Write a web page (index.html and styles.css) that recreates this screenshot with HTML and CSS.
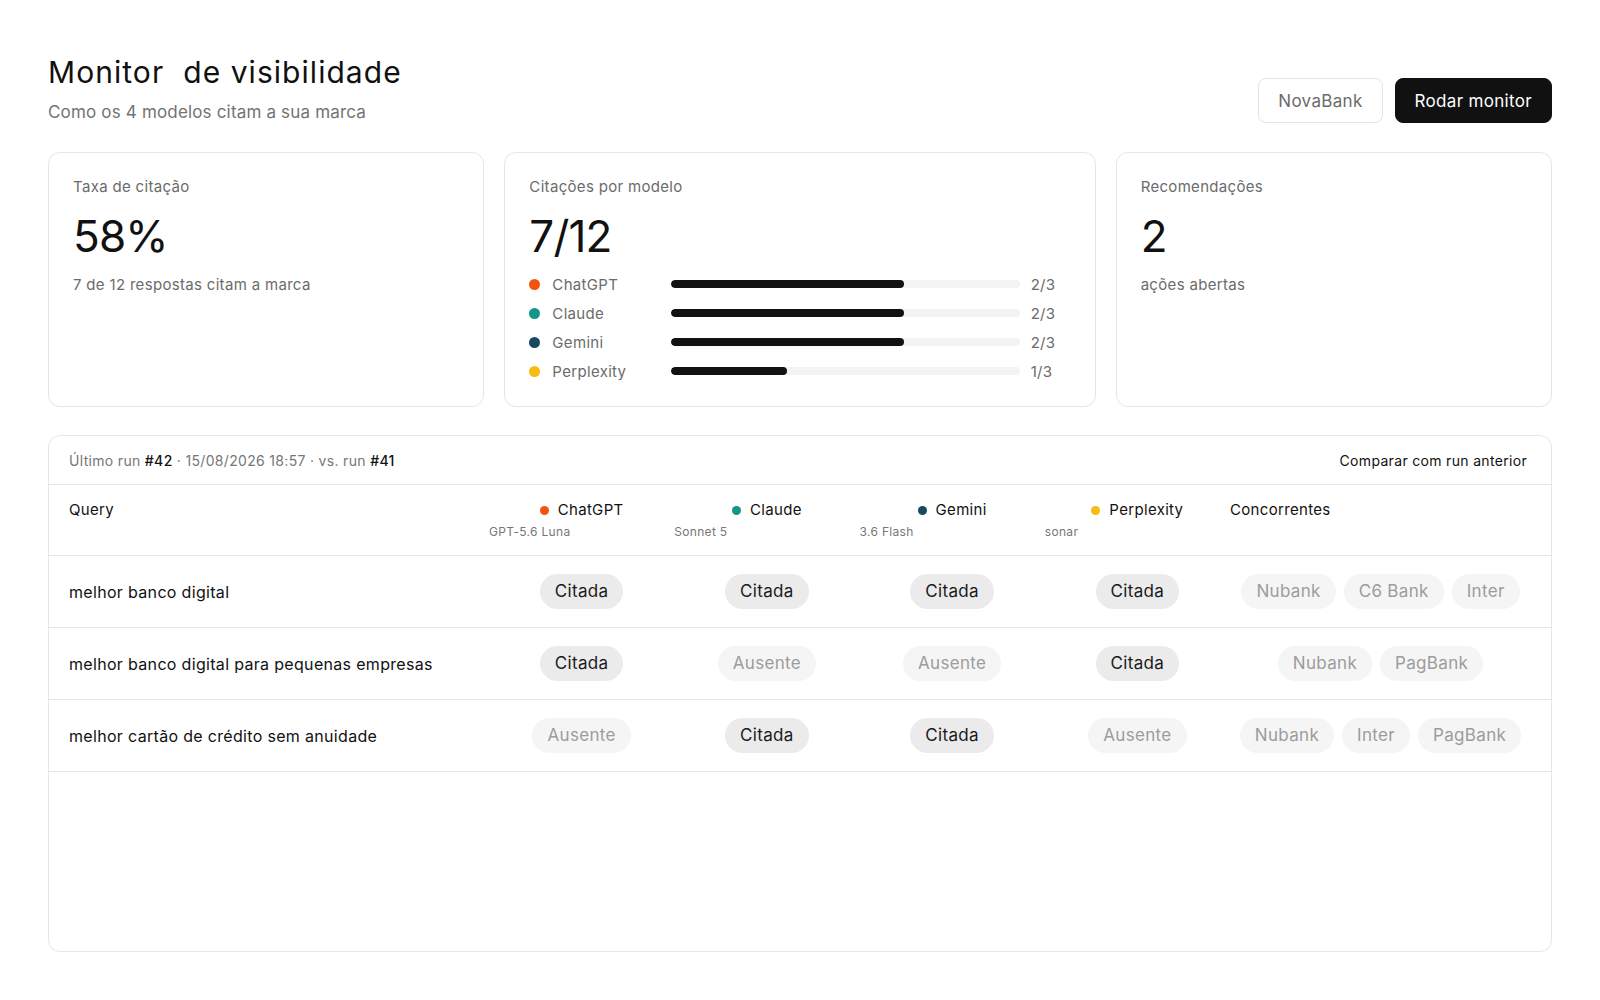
FILE: index.html
```html
<!DOCTYPE html>
<html lang="pt-BR">

<head>
    <meta charset="utf-8" />
    <title>Monitor de visibilidade</title>
    <link rel="stylesheet" href="styles.css">
</head>

<body>

<div class="page">
    <div class="top">
        <div class="heading">
            <h1>Monitor&nbsp; de visibilidade</h1>
            <p class="sub">Como os 4 modelos citam a sua marca</p>
        </div>
        <div class="actions">
            <button class="btn">NovaBank</button>
            <button class="btn btn-dark">Rodar monitor</button>
        </div>
    </div>

    <div class="cards">
        <div class="card">
            <div class="card-label">Taxa de citação</div>
            <div class="card-value">58%</div>
            <div class="card-note">7 de 12 respostas citam a marca</div>
        </div>
        <div class="card">
            <div class="card-label">Citações por modelo</div>
            <div class="card-value">7/12</div>
            <ul class="bars">
                <li><span class="dot gpt"></span><span class="bar-name">ChatGPT</span><span class="track"><span class="fill" style="width: 66.67%"></span></span><span class="bar-num">2/3</span></li>
                <li><span class="dot claude"></span><span class="bar-name">Claude</span><span class="track"><span class="fill" style="width: 66.67%"></span></span><span class="bar-num">2/3</span></li>
                <li><span class="dot gemini"></span><span class="bar-name">Gemini</span><span class="track"><span class="fill" style="width: 66.67%"></span></span><span class="bar-num">2/3</span></li>
                <li><span class="dot pplx"></span><span class="bar-name">Perplexity</span><span class="track"><span class="fill" style="width: 33.33%"></span></span><span class="bar-num">1/3</span></li>
            </ul>
        </div>
        <div class="card">
            <div class="card-label">Recomendações</div>
            <div class="card-value">2</div>
            <div class="card-note">ações abertas</div>
        </div>
    </div>

    <div class="runs">
        <div class="runs-meta">
            <span>Último run <b>#42</b> · 15/08/2026 18:57 · vs. run <b>#41</b></span>
            <button class="link">Comparar com run anterior</button>
        </div>

        <div class="row head">
            <div class="cell-query">Query</div>
            <div class="model">
                <div class="model-name"><span class="dot gpt"></span>ChatGPT</div>
                <div class="model-ver">GPT-5.6 Luna</div>
            </div>
            <div class="model">
                <div class="model-name"><span class="dot claude"></span>Claude</div>
                <div class="model-ver">Sonnet 5</div>
            </div>
            <div class="model">
                <div class="model-name"><span class="dot gemini"></span>Gemini</div>
                <div class="model-ver">3.6 Flash</div>
            </div>
            <div class="model">
                <div class="model-name"><span class="dot pplx"></span>Perplexity</div>
                <div class="model-ver">sonar</div>
            </div>
            <div class="rivals-head">Concorrentes</div>
        </div>

        <div class="row">
            <div class="cell-query">melhor banco digital</div>
            <div class="cell"><span class="pill on">Citada</span></div>
            <div class="cell"><span class="pill on">Citada</span></div>
            <div class="cell"><span class="pill on">Citada</span></div>
            <div class="cell"><span class="pill on">Citada</span></div>
            <div class="cell rivals"><span class="pill">Nubank</span><span class="pill">C6 Bank</span><span class="pill">Inter</span></div>
        </div>

        <div class="row">
            <div class="cell-query">melhor banco digital para pequenas empresas</div>
            <div class="cell"><span class="pill on">Citada</span></div>
            <div class="cell"><span class="pill">Ausente</span></div>
            <div class="cell"><span class="pill">Ausente</span></div>
            <div class="cell"><span class="pill on">Citada</span></div>
            <div class="cell rivals"><span class="pill">Nubank</span><span class="pill">PagBank</span></div>
        </div>

        <div class="row">
            <div class="cell-query">melhor cartão de crédito sem anuidade</div>
            <div class="cell"><span class="pill">Ausente</span></div>
            <div class="cell"><span class="pill on">Citada</span></div>
            <div class="cell"><span class="pill on">Citada</span></div>
            <div class="cell"><span class="pill">Ausente</span></div>
            <div class="cell rivals"><span class="pill">Nubank</span><span class="pill">Inter</span><span class="pill">PagBank</span></div>
        </div>
    </div>
</div>

</body>

</html>
```

FILE: styles.css
```css
* {
    padding: 0;
    margin: 0;
    list-style: none;
    box-sizing: border-box;
}

body {
    font-family: "Inter", "Noto Sans", sans-serif;
    letter-spacing: 0.02em;
    color: #111;
    background: #fff;
}

button {
    font-family: inherit;
    letter-spacing: inherit;
    cursor: pointer;
}

.page {
    height: 100vh;
    padding: 54px 48px 48px;
    display: flex;
    flex-direction: column;
    gap: 28px;
}

/* cabeçalho */
.top {
    display: flex;
    justify-content: space-between;
    align-items: flex-end;
}

.heading {
    padding-bottom: 2px;
}

.heading h1 {
    font-size: 30px;
    line-height: 36px;
    font-weight: 400;
    letter-spacing: 0.035em;
}

.heading .sub {
    margin-top: 12px;
    font-size: 17px;
    line-height: 20px;
    letter-spacing: 0.01em;
    color: #737373;
}

.actions {
    display: flex;
    gap: 12px;
    margin-bottom: 1px;
}

.btn {
    height: 45px;
    padding: 0 19px;
    font-size: 17px;
    border: 1px solid #e3e3e3;
    border-radius: 8px;
    background: #fff;
    color: #6b6b6b;
}

.btn-dark {
    background: #111;
    border-color: #111;
    color: #fff;
}

/* cards */
.cards {
    display: grid;
    grid-template-columns: 1fr 1.355fr 1fr;
    gap: 20px;
    height: 255px;
}

.card {
    border: 1px solid #e6e6e6;
    border-radius: 12px;
    padding: 24px 24px 24px;
}

.card-label {
    font-size: 15px;
    line-height: 20px;
    color: #6b6b6b;
}

.card-value {
    margin-top: 17px;
    font-size: 44px;
    line-height: 44px;
    letter-spacing: -0.8px;
}

.card-note {
    margin-top: 17px;
    font-size: 15px;
    line-height: 20px;
    color: #6b6b6b;
}

.bars {
    margin-top: 16px;
    display: flex;
    flex-direction: column;
    gap: 9px;
}

.bars li {
    display: grid;
    grid-template-columns: 12px 108px 1fr 40px;
    column-gap: 11px;
    align-items: center;
    height: 20px;
    font-size: 15px;
    color: #6b6b6b;
}

.bars .dot {
    width: 11px;
    height: 11px;
}

.track {
    height: 8px;
    border-radius: 4px;
    background: #f3f3f3;
    overflow: hidden;
}

.fill {
    display: block;
    height: 100%;
    border-radius: 4px;
    background: #121212;
}

.dot {
    display: inline-block;
    width: 9px;
    height: 9px;
    border-radius: 50%;
}

.gpt { background: #f2540f; }
.claude { background: #12968a; }
.gemini { background: #174a5e; }
.pplx { background: #f8bb12; }

/* tabela de runs */
.runs {
    flex: 1;
    border: 1px solid #e6e6e6;
    border-radius: 12px;
    overflow: hidden;
}

.runs-meta {
    height: 49px;
    padding: 0 24px 0 20px;
    display: flex;
    justify-content: space-between;
    align-items: center;
    border-bottom: 1px solid #e6e6e6;
    font-size: 14px;
    color: #777;
}

.runs-meta b {
    font-weight: 500;
    color: #111;
}

.link {
    border: 0;
    background: none;
    font-size: 14px;
    color: #111;
}

.row {
    display: grid;
    grid-template-columns: 420px repeat(4, 1fr) 301px;
    align-items: center;
    height: 72px;
    padding: 0 20px;
    border-bottom: 1px solid #e6e6e6;
    font-size: 16px;
}

.row.head {
    height: 71px;
    align-items: start;
    padding-top: 15px;
    font-size: 15px;
}

.model {
    display: flex;
    flex-direction: column;
}

.model-name {
    align-self: center;
    display: flex;
    align-items: center;
    gap: 9px;
    line-height: 20px;
}

.model-ver {
    margin-top: 4px;
    font-size: 12px;
    line-height: 16px;
    color: #777;
}

.cell-query,
.rivals-head {
    line-height: 20px;
}

.cell {
    display: flex;
    justify-content: center;
    gap: 8px;
}

.pill {
    height: 35px;
    line-height: 35px;
    padding: 0 15px;
    border-radius: 18px;
    font-size: 17px;
    background: #f5f5f5;
    color: #9c9c9c;
    white-space: nowrap;
}

.pill.on {
    background: #ebebeb;
    color: #1a1a1a;
}
```
